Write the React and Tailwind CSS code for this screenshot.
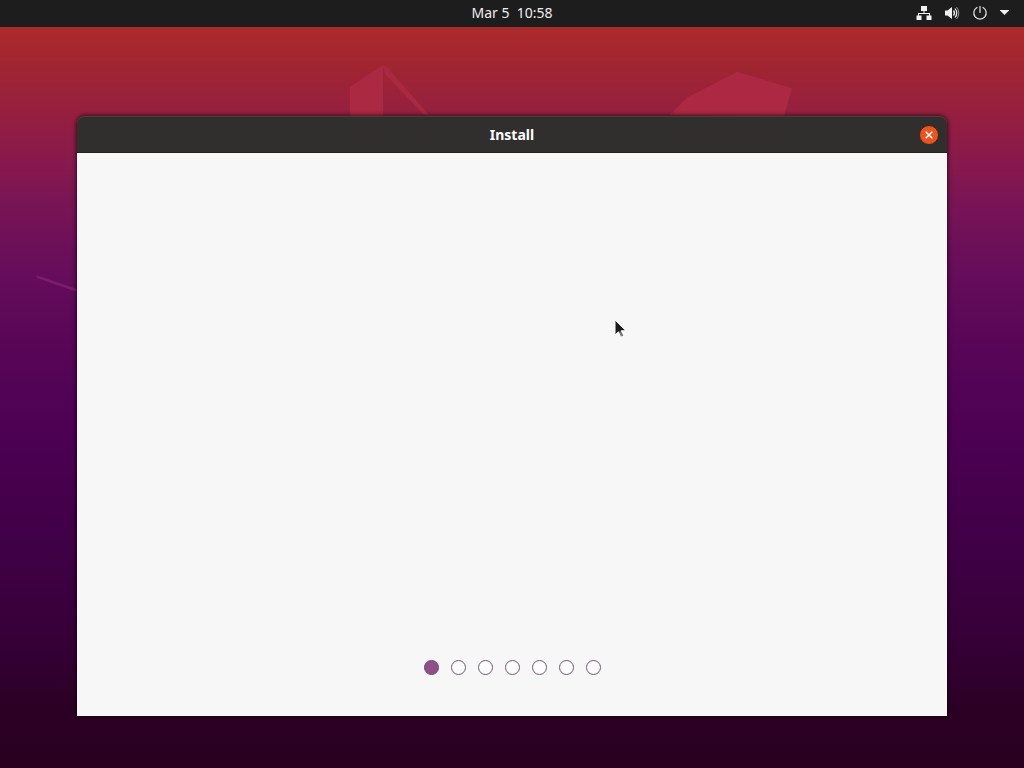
function Wallpaper() {
  return (
    <svg
      className="absolute inset-0 h-full w-full"
      viewBox="0 0 1024 768"
      preserveAspectRatio="xMidYMid slice"
      aria-hidden="true"
    >
      <defs>
        <linearGradient id="sky" x1="0" y1="0" x2="0" y2="1">
          <stop offset="0.035" stopColor="#ac2a2a" />
          <stop offset="0.09" stopColor="#a02532" />
          <stop offset="0.15" stopColor="#951f40" />
          <stop offset="0.21" stopColor="#88194c" />
          <stop offset="0.27" stopColor="#771456" />
          <stop offset="0.36" stopColor="#650c5b" />
          <stop offset="0.46" stopColor="#570557" />
          <stop offset="0.58" stopColor="#4b0052" />
          <stop offset="0.7" stopColor="#410047" />
          <stop offset="0.82" stopColor="#370039" />
          <stop offset="0.92" stopColor="#2c0026" />
          <stop offset="1" stopColor="#29001f" />
        </linearGradient>
      </defs>
      <rect width="1024" height="768" fill="url(#sky)" />
      <path d="M350 87 L383 65 V130 H350 Z" fill="#ac2943" />
      <path d="M383 65 L388 68 L429 115 H424 L385 74 Z" fill="#a82940" />
      <path d="M670 115 L688 97 L737 72 L792 88 L784 116 Z" fill="#ad2943" />
      <path d="M36 275 L80 290 V293 L37 278 Z" fill="#7c1c6c" />
    </svg>
  );
}

function NetworkIcon() {
  return (
    <svg width="16" height="16" viewBox="0 0 16 16" fill="#f2f2f2" aria-hidden="true">
      <path d="M5 1h6v5H8.500v2H14v2.500h1.500V15h-5v-4.500H13V9H3v1.500h2.500V15h-5v-4.500H2V8h5.500V6H5z" />
    </svg>
  );
}

function VolumeIcon() {
  return (
    <svg width="16" height="16" viewBox="0 0 16 16" fill="none" stroke="#f2f2f2" aria-hidden="true">
      <path d="M1 5.500h2.500L8 2v12l-4.500-3.500H1z" fill="#f2f2f2" stroke="none" />
      <path d="M9.500 5.500q2 2.500 0 5" strokeWidth="1.300" />
      <path d="M11 3.500q3.500 4.500 0 9" strokeWidth="1.200" />
      <path d="M12.600 2q4.400 6 0 12" strokeWidth="0.900" stroke="#a5a5a5" />
    </svg>
  );
}

function PowerIcon() {
  return (
    <svg
      width="16"
      height="16"
      viewBox="0 0 16 16"
      fill="none"
      stroke="#e8e8e8"
      strokeWidth="1.200"
      strokeLinecap="round"
      aria-hidden="true"
    >
      <path d="M8 1.500v6" />
      <path d="M5 2.500a6.200 6.200 0 1 0 6 0" />
    </svg>
  );
}

function TopBar() {
  return (
    <header className="relative grid h-[27px] grid-cols-[1fr_auto_1fr] items-center bg-[#1d1d1d] pb-0.5 text-sm text-[#ededed]">
      <button type="button" className="col-start-2 whitespace-pre leading-5">
        {"Mar 5  10:58"}
      </button>
      <button
        type="button"
        aria-label="System menu"
        className="flex items-center gap-3 justify-self-end pr-[15px]"
      >
        <NetworkIcon />
        <VolumeIcon />
        <PowerIcon />
        <svg width="9" height="5" viewBox="0 0 9 5" fill="#f2f2f2" aria-hidden="true">
          <path d="M-0.500 0h10l-5 5z" />
        </svg>
      </button>
    </header>
  );
}

function Steps({ count, current }) {
  return (
    <ol className="flex gap-3">
      {Array.from({ length: count }, (_, i) => (
        <li
          key={i}
          aria-current={i === current ? "step" : undefined}
          className={
            i === current
              ? "size-[15px] rounded-full border border-[#7a4375] bg-[#8d5087]"
              : "size-[15px] rounded-full border border-[#715a6d] bg-[#fdfdfd]"
          }
        />
      ))}
    </ol>
  );
}

function Pointer() {
  return (
    <svg
      className="absolute left-[61.700%] top-[33.800%]"
      width="13"
      height="20"
      viewBox="0 0 13 20"
      aria-hidden="true"
    >
      <path
        d="M1 1v15l3.500-3.200 2.500 5 2.500-1.200-2.400-4.800H12z"
        fill="#1b1b1b"
        stroke="#ffffff"
        strokeWidth="1"
      />
      <path d="M5 13l2.200 4.500 1.800-1-2-4.500z" fill="#777777" />
    </svg>
  );
}

function InstallWindow() {
  return (
    <section
      aria-labelledby="window-title"
      className="relative flex w-full max-w-[870px] flex-col rounded-t-lg shadow-[0_0_4px_1px_rgba(0,0,0,0.6)]"
    >
      <div className="grid h-[37px] grid-cols-[1fr_auto_1fr] items-center rounded-t-lg border-t border-b border-t-[#454342] border-b-[#222222] bg-[#302f2e] px-2">
        <h1 id="window-title" className="col-start-2 text-sm leading-5 font-bold text-white">
          Install
        </h1>
        <button
          type="button"
          aria-label="Close"
          className="flex size-5 items-center justify-center justify-self-end rounded-full border border-[#3a2720] bg-[#e95420]"
        >
          <svg width="8" height="8" viewBox="0 0 8 8" stroke="#ffffff" strokeWidth="1.500" aria-hidden="true">
            <path d="M0.700 0.700l6.600 6.600M7.300 0.700l-6.600 6.600" />
          </svg>
        </button>
      </div>
      <div className="relative flex flex-1 items-end justify-center bg-[#f7f7f7] pb-[41px]">
        <Steps count={7} current={0} />
      </div>
      <Pointer />
    </section>
  );
}

export default function App() {
  return (
    <div className="relative flex min-h-screen flex-col overflow-hidden bg-[#28001e] font-['Noto_Sans',sans-serif]">
      <Wallpaper />
      <TopBar />
      <main className="relative flex flex-1 justify-center px-4 pt-[89px] pb-[52px]">
        <InstallWindow />
      </main>
    </div>
  );
}
